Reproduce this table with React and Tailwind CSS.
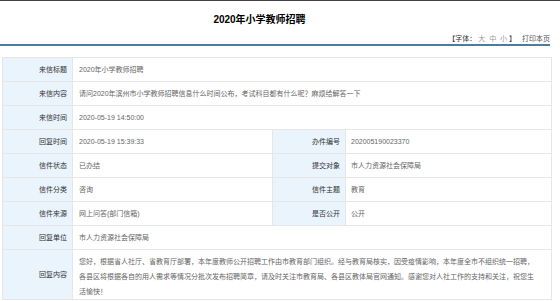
import React from "react";

const font = "font-['Liberation_Sans','Noto_Sans_CJK_SC',sans-serif]";

function Label({ children, wide }) {
    return (
        <div
            className={`${wide ? "w-[73px]" : "w-[70px]"} shrink-0 bg-[#eaf4fd] border-r border-[#e6e6e6] text-right pr-[5px] text-[#333] flex items-center justify-end`}
        >
            {children}
        </div>
    );
}

function Row({ label, value }) {
    return (
        <div className="flex h-[24px] border-b border-[#e6e6e6]">
            <Label>{label}</Label>
            <div className="flex-1 pl-[6px] flex items-center text-[#666]">{value}</div>
        </div>
    );
}

function DoubleRow({ label, value, label2, value2 }) {
    return (
        <div className="flex h-[24px] border-b border-[#e6e6e6]">
            <Label>{label}</Label>
            <div className="w-[200px] shrink-0 border-r border-[#e6e6e6] pl-[6px] flex items-center text-[#666]">
                {value}
            </div>
            <Label wide>{label2}</Label>
            <div className="flex-1 pl-[5px] flex items-center text-[#666]">{value2}</div>
        </div>
    );
}

export default function App() {
    return (
        <div className={`w-[560px] h-[301px] bg-white overflow-hidden ${font}`}>
            <div className="h-px bg-[#444]" />

            {/* Title */}
            <h1 className="w-[519px] pt-[12px] text-center text-[10px] leading-[14px] font-bold text-black">
                2020年小学教师招聘
            </h1>

            {/* Toolbar */}
            <div className="w-[550px] mt-[7px] text-right text-[7px] leading-[10px] text-[#333]">
                【字体：
                <span className="text-[#999]"> 大 &nbsp;中 &nbsp;小 </span>
                】
                <span className="ml-[6px] text-[#555]">打印本页</span>
            </div>
            <div className="w-[550px] h-[2px] bg-[#4d7aa1]" />

            {/* Detail table */}
            <div className="ml-[2px] mt-[11px] w-[550px] border border-[#e6e6e6] text-[7px] leading-[10px]">
                <Row label="来信标题" value="2020年小学教师招聘" />
                <Row
                    label="来信内容"
                    value="请问2020年滨州市小学教师招聘信息什么时间公布，考试科目都有什么呢？麻烦给解答一下"
                />
                <Row label="来信时间" value="2020-05-19 14:50:00" />
                <DoubleRow
                    label="回复时间"
                    value="2020-05-19 15:39:33"
                    label2="办件编号"
                    value2="202005190023370"
                />
                <DoubleRow label="信件状态" value="已办结" label2="提交对象" value2="市人力资源社会保障局" />
                <DoubleRow label="信件分类" value="咨询" label2="信件主题" value2="教育" />
                <DoubleRow label="信件来源" value="网上问答(部门信箱)" label2="是否公开" value2="公开" />
                <Row label="回复单位" value="市人力资源社会保障局" />
                <div className="flex">
                    <Label>回复内容</Label>
                    <div className="flex-1 pl-[6px] pr-[14px] pt-[4px] pb-0 leading-[15px] text-[#666]">
                        您好，根据省人社厅、省教育厅部署，本年度教师公开招聘工作由市教育部门组织。经与教育局核实，因受疫情影响，本年度全市不组织统一招聘，各县区将根据各自的用人需求等情况分批次发布招聘简章，请及时关注市教育局、各县区教体局官网通知。感谢您对人社工作的支持和关注，祝您生活愉快！
                    </div>
                </div>
            </div>
        </div>
    );
}
